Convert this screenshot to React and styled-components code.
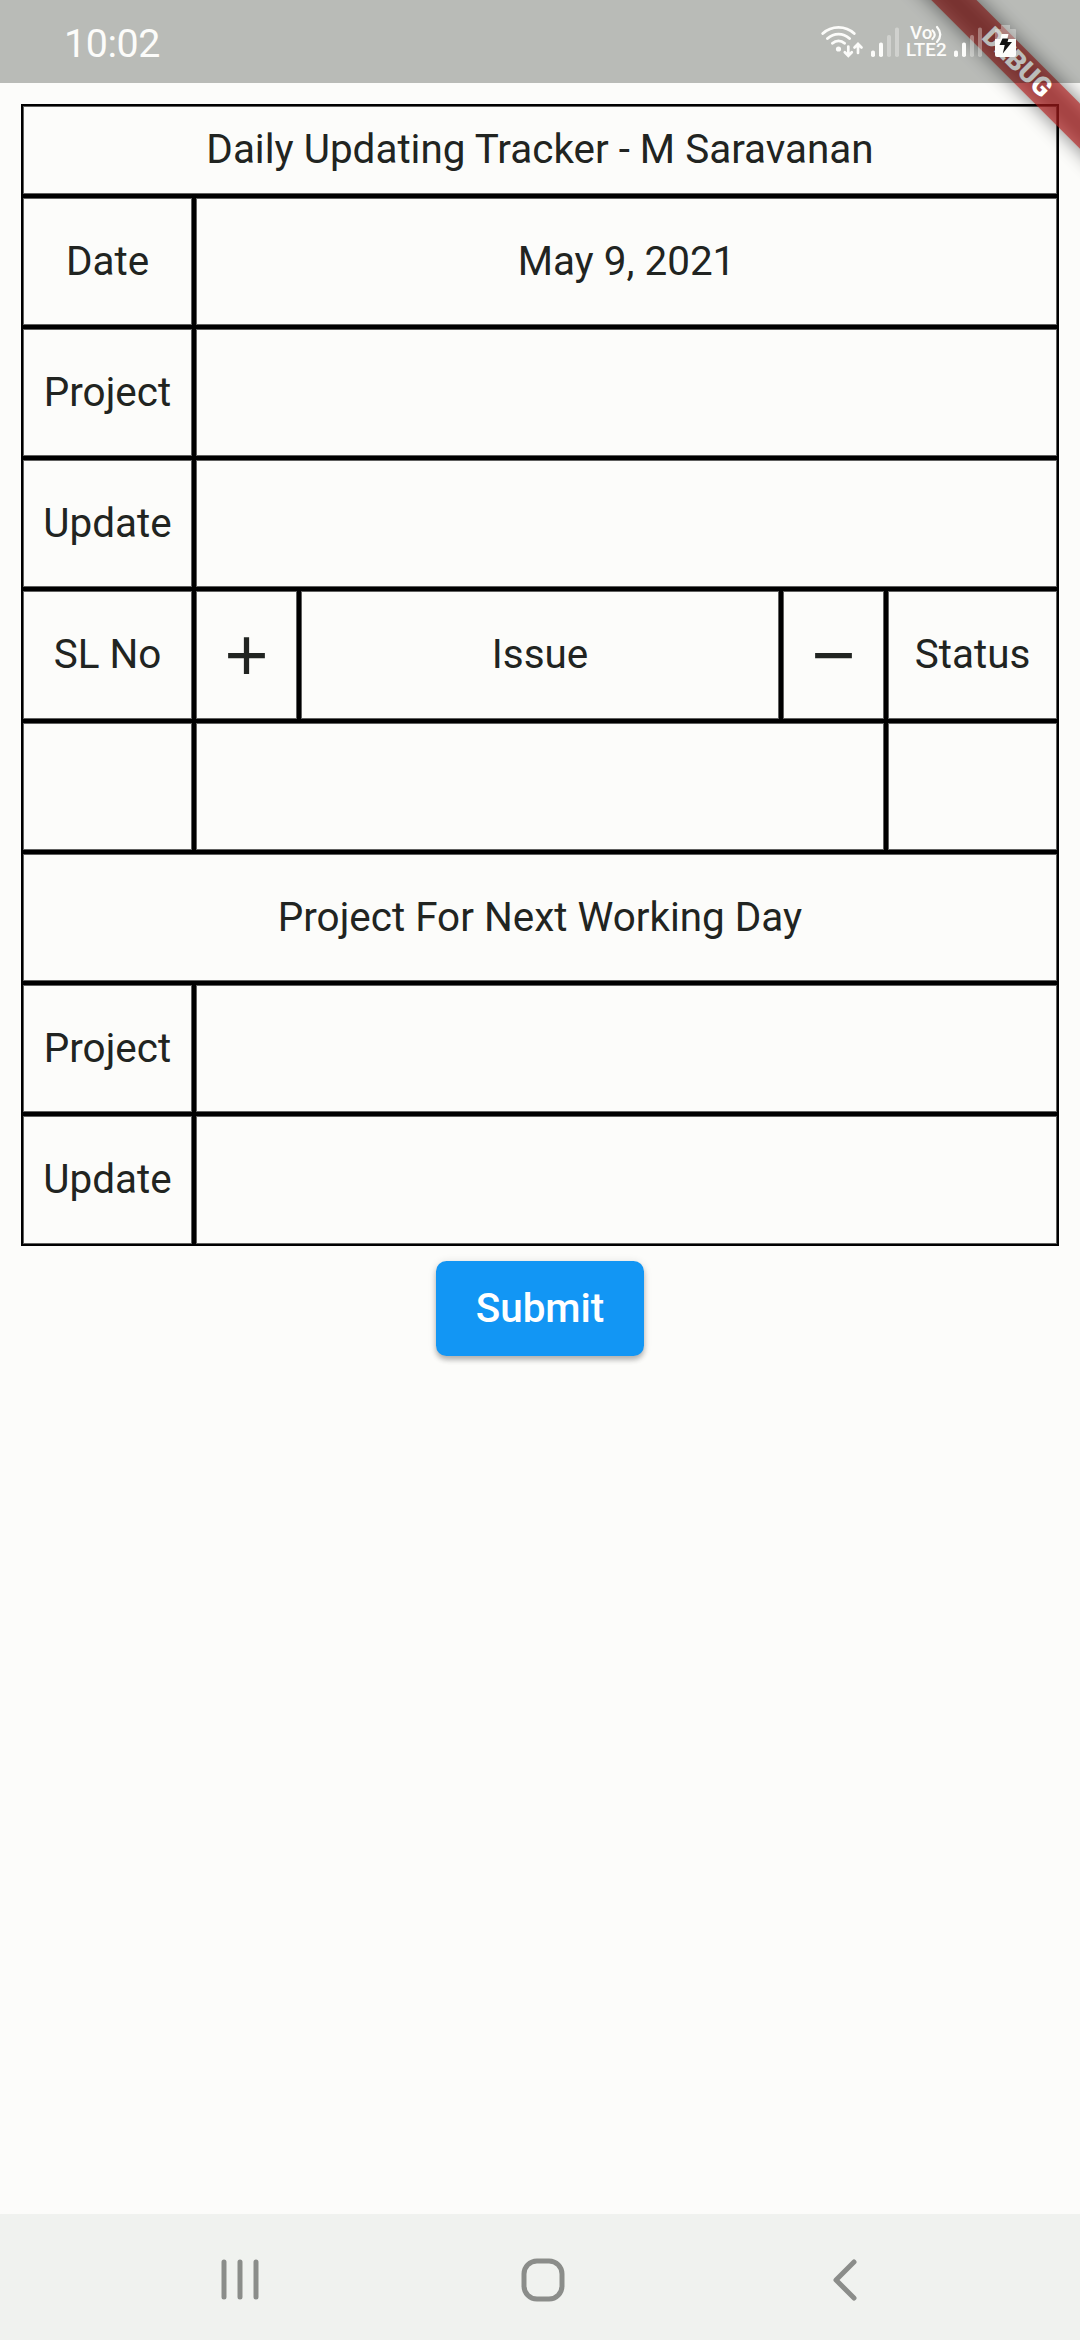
import React from "react";
import styled, { createGlobalStyle } from "styled-components";

const GlobalStyle = createGlobalStyle`
  * { box-sizing: border-box; }
  body { margin: 0; background: #fcfcfa; font-family: Roboto, "Liberation Sans", sans-serif; }
`;

const Screen = styled.div`
  position: relative;
  display: flex;
  flex-direction: column;
  width: 1080px;
  height: 2340px;
  overflow: hidden;
  background: #fcfcfa;
`;

const StatusBar = styled.header`
  position: relative;
  z-index: 2;
  flex: none;
  display: flex;
  align-items: center;
  justify-content: space-between;
  height: 83px;
  padding: 3px 64px 0 64px;
  background: rgba(0, 6, 0, 0.265);
`;

const Clock = styled.time`
  padding-top: 1px;
  font-size: 39.4px;
  letter-spacing: -0.4px;
  line-height: 48px;
  color: #fcfcfa;
`;

const StatusIcons = styled.div`
  display: flex;
  align-items: flex-start;
  height: 38px;
`;

const WifiIcon = styled.svg`
  width: 44px;
  height: 38px;
  margin-right: 6px;
`;

const SignalIcon = styled.svg`
  width: 28px;
  height: 38px;
`;

const Volte = styled.div`
  display: flex;
  flex-direction: column;
  width: 41px;
  margin: 0 7px;
  font-size: 18.8px;
  font-weight: 500;
  line-height: 17px;
  color: #fcfcfa;
  white-space: nowrap;
`;

const VolteTop = styled.span`
  display: flex;
  height: 18px;
  padding-left: 4px;
  line-height: 18px;
`;

const Waves = styled.svg`
  flex: none;
  width: 12px;
  height: 20px;
  margin-left: -1px;
`;

const BatteryIcon = styled.svg`
  width: 21px;
  height: 38px;
  margin-left: 13px;
`;

const BannerClip = styled.div`
  position: absolute;
  z-index: 1;
  top: 0;
  right: 0;
  width: 300px;
  height: 300px;
  overflow: hidden;
`;

const Banner = styled.div`
  position: absolute;
  left: 87.3px;
  top: 47.2px;
  display: flex;
  align-items: center;
  justify-content: center;
  width: 300px;
  height: 31.5px;
  transform: rotate(45deg);
  color: #ffffff;
  font-size: 26.8px;
  font-weight: 900;
  line-height: 31px;

  &::before,
  &::after {
    content: "";
    position: absolute;
    z-index: -1;
    inset: 0;
  }
  &::before {
    background: rgba(0, 0, 0, 0.5);
    filter: blur(9.6px);
  }
  &::after {
    background: rgba(183, 28, 28, 0.63);
  }
`;

const Page = styled.main`
  flex: 1;
  display: flex;
  flex-direction: column;
  align-items: center;
  padding: 21px 21px 0;
`;

const Table = styled.div`
  display: flex;
  flex-direction: column;
  width: 100%;
`;

const Row = styled.div`
  display: grid;
  grid-template-columns: ${(p) => p.$columns || "173px 1fr"};
  height: ${(p) => p.$height}px;
`;

const Cell = styled.div`
  display: flex;
  align-items: center;
  justify-content: center;
  padding-bottom: 2px;
  border: 2px solid #000000;
  box-shadow: inset 0 0 0 1px rgba(0, 0, 0, 0.62);
  color: #212421;
  font-size: 40.43px;
  line-height: 48px;
  white-space: nowrap;
`;

const CellIcon = styled.svg`
  width: 63px;
  height: 63px;
  margin-top: 2px;
  fill: #212421;
`;

const Submit = styled.button`
  width: 208px;
  height: 95px;
  margin-top: 15px;
  padding: 0 0 2px;
  border: 0;
  border-radius: 10.5px;
  background: #1296f4;
  box-shadow: 0 4px 5px rgba(0, 0, 0, 0.24), 0 1px 8px rgba(0, 0, 0, 0.12);
  color: #ffffff;
  font-family: inherit;
  font-size: 40.43px;
  font-weight: 500;
`;

const NavBar = styled.nav`
  flex: none;
  display: flex;
  justify-content: space-between;
  align-items: center;
  height: 126px;
  padding: 6px 206px 0 212px;
  background: #f0f2ef;
`;

const NavIcon = styled.svg`
  width: 56px;
  height: 56px;
  fill: none;
  stroke: #8b8d8a;
  stroke-width: 5;
  stroke-linecap: round;
  stroke-linejoin: round;
`;

function Signal() {
  return (
    <SignalIcon viewBox="0 0 28 38" fill="#fcfcfa">
      <rect x="0" y="26.500" width="4" height="6.500" rx="1.800" />
      <rect x="8" y="18.500" width="4" height="14.500" rx="1.800" />
      <rect x="16" y="11" width="4" height="22" rx="1.800" opacity="0.35" />
      <rect x="24" y="3.500" width="4" height="29.500" rx="1.800" opacity="0.35" />
    </SignalIcon>
  );
}

const issueColumns = "173px 105px 1fr 105px 173px";

export default function App() {
  return (
    <Screen>
      <GlobalStyle />
      <StatusBar>
        <Clock>10:02</Clock>
        <StatusIcons>
          <WifiIcon viewBox="0 0 44 38" fill="none" stroke="#fcfcfa" strokeWidth="2.9" strokeLinecap="round">
            <path d="M1.800 9.500C10.500 1.300 24.500 1.300 33.200 9.500M6.500 14.500C13 8.600 22 8.600 28.500 14.500M11.500 19.300C15 16 20 16 23.500 19.300" />
            <circle cx="17.500" cy="25" r="2.600" fill="#fcfcfa" stroke="none" />
            <path d="M27.300 22.500v9M23.800 28.300l3.500 3.500 3.500-3.500M37 29v-8.500M33.500 23.500l3.500-3.500L40.500 23.500" strokeWidth="2.7" />
          </WifiIcon>
          <Signal />
          <Volte>
            <VolteTop>
              Vo
              <Waves viewBox="0 0 12 20" fill="none" stroke="#fcfcfa" strokeWidth="2.2" strokeLinecap="round">
                <path d="M1.500 6.500q4.500 4 0 8.500M6 3q6.500 7.500 0 15" />
              </Waves>
            </VolteTop>
            <span>LTE2</span>
          </Volte>
          <Signal />
          <BatteryIcon viewBox="0 0 21 38">
            <path d="M6 1h9v4h5q1 0 1 1v9H0V6q0-1 1-1h5z" fill="#fcfcfa" opacity="0.35" />
            <path d="M0 15h21v16q0 2-2 2H2q-2 0-2-2z" fill="#fcfcfa" />
            <path d="M6.500 10h7l-1.500 6h5L7.500 30l1.700-9H4z" fill="#fcfcfa" />
            <path d="M7.500 14.500h6l-1 3.500h4.500L7.800 29.500l1.900-8.500H4.500z" fill="#111" />
          </BatteryIcon>
        </StatusIcons>
      </StatusBar>
      <BannerClip>
        <Banner>DEBUG</Banner>
      </BannerClip>
      <Page>
        <Table>
          <Row $height={92} $columns="1fr">
            <Cell>Daily Updating Tracker - M Saravanan</Cell>
          </Row>
          <Row $height={131}>
            <Cell>Date</Cell>
            <Cell>May 9, 2021</Cell>
          </Row>
          <Row $height={131}>
            <Cell>Project</Cell>
            <Cell />
          </Row>
          <Row $height={131}>
            <Cell>Update</Cell>
            <Cell />
          </Row>
          <Row $height={132} $columns={issueColumns}>
            <Cell>SL No</Cell>
            <Cell>
              <CellIcon viewBox="0 0 24 24">
                <path d="M19 13h-6v6h-2v-6H5v-2h6V5h2v6h6v2z" />
              </CellIcon>
            </Cell>
            <Cell>Issue</Cell>
            <Cell>
              <CellIcon viewBox="0 0 24 24">
                <path d="M19 13H5v-2h14v2z" />
              </CellIcon>
            </Cell>
            <Cell>Status</Cell>
          </Row>
          <Row $height={131} $columns="173px 1fr 173px">
            <Cell />
            <Cell />
            <Cell />
          </Row>
          <Row $height={131} $columns="1fr">
            <Cell>Project For Next Working Day</Cell>
          </Row>
          <Row $height={131}>
            <Cell>Project</Cell>
            <Cell />
          </Row>
          <Row $height={132}>
            <Cell>Update</Cell>
            <Cell />
          </Row>
        </Table>
        <Submit>Submit</Submit>
      </Page>
      <NavBar>
        <NavIcon viewBox="0 0 56 56">
          <path d="M12 10v35M28 10v35M44 10v35" />
        </NavIcon>
        <NavIcon viewBox="0 0 56 56">
          <rect x="9" y="9" width="38" height="38" rx="13" />
        </NavIcon>
        <NavIcon viewBox="0 0 56 56">
          <path d="M36 10L18 28l18 18" />
        </NavIcon>
      </NavBar>
    </Screen>
  );
}
